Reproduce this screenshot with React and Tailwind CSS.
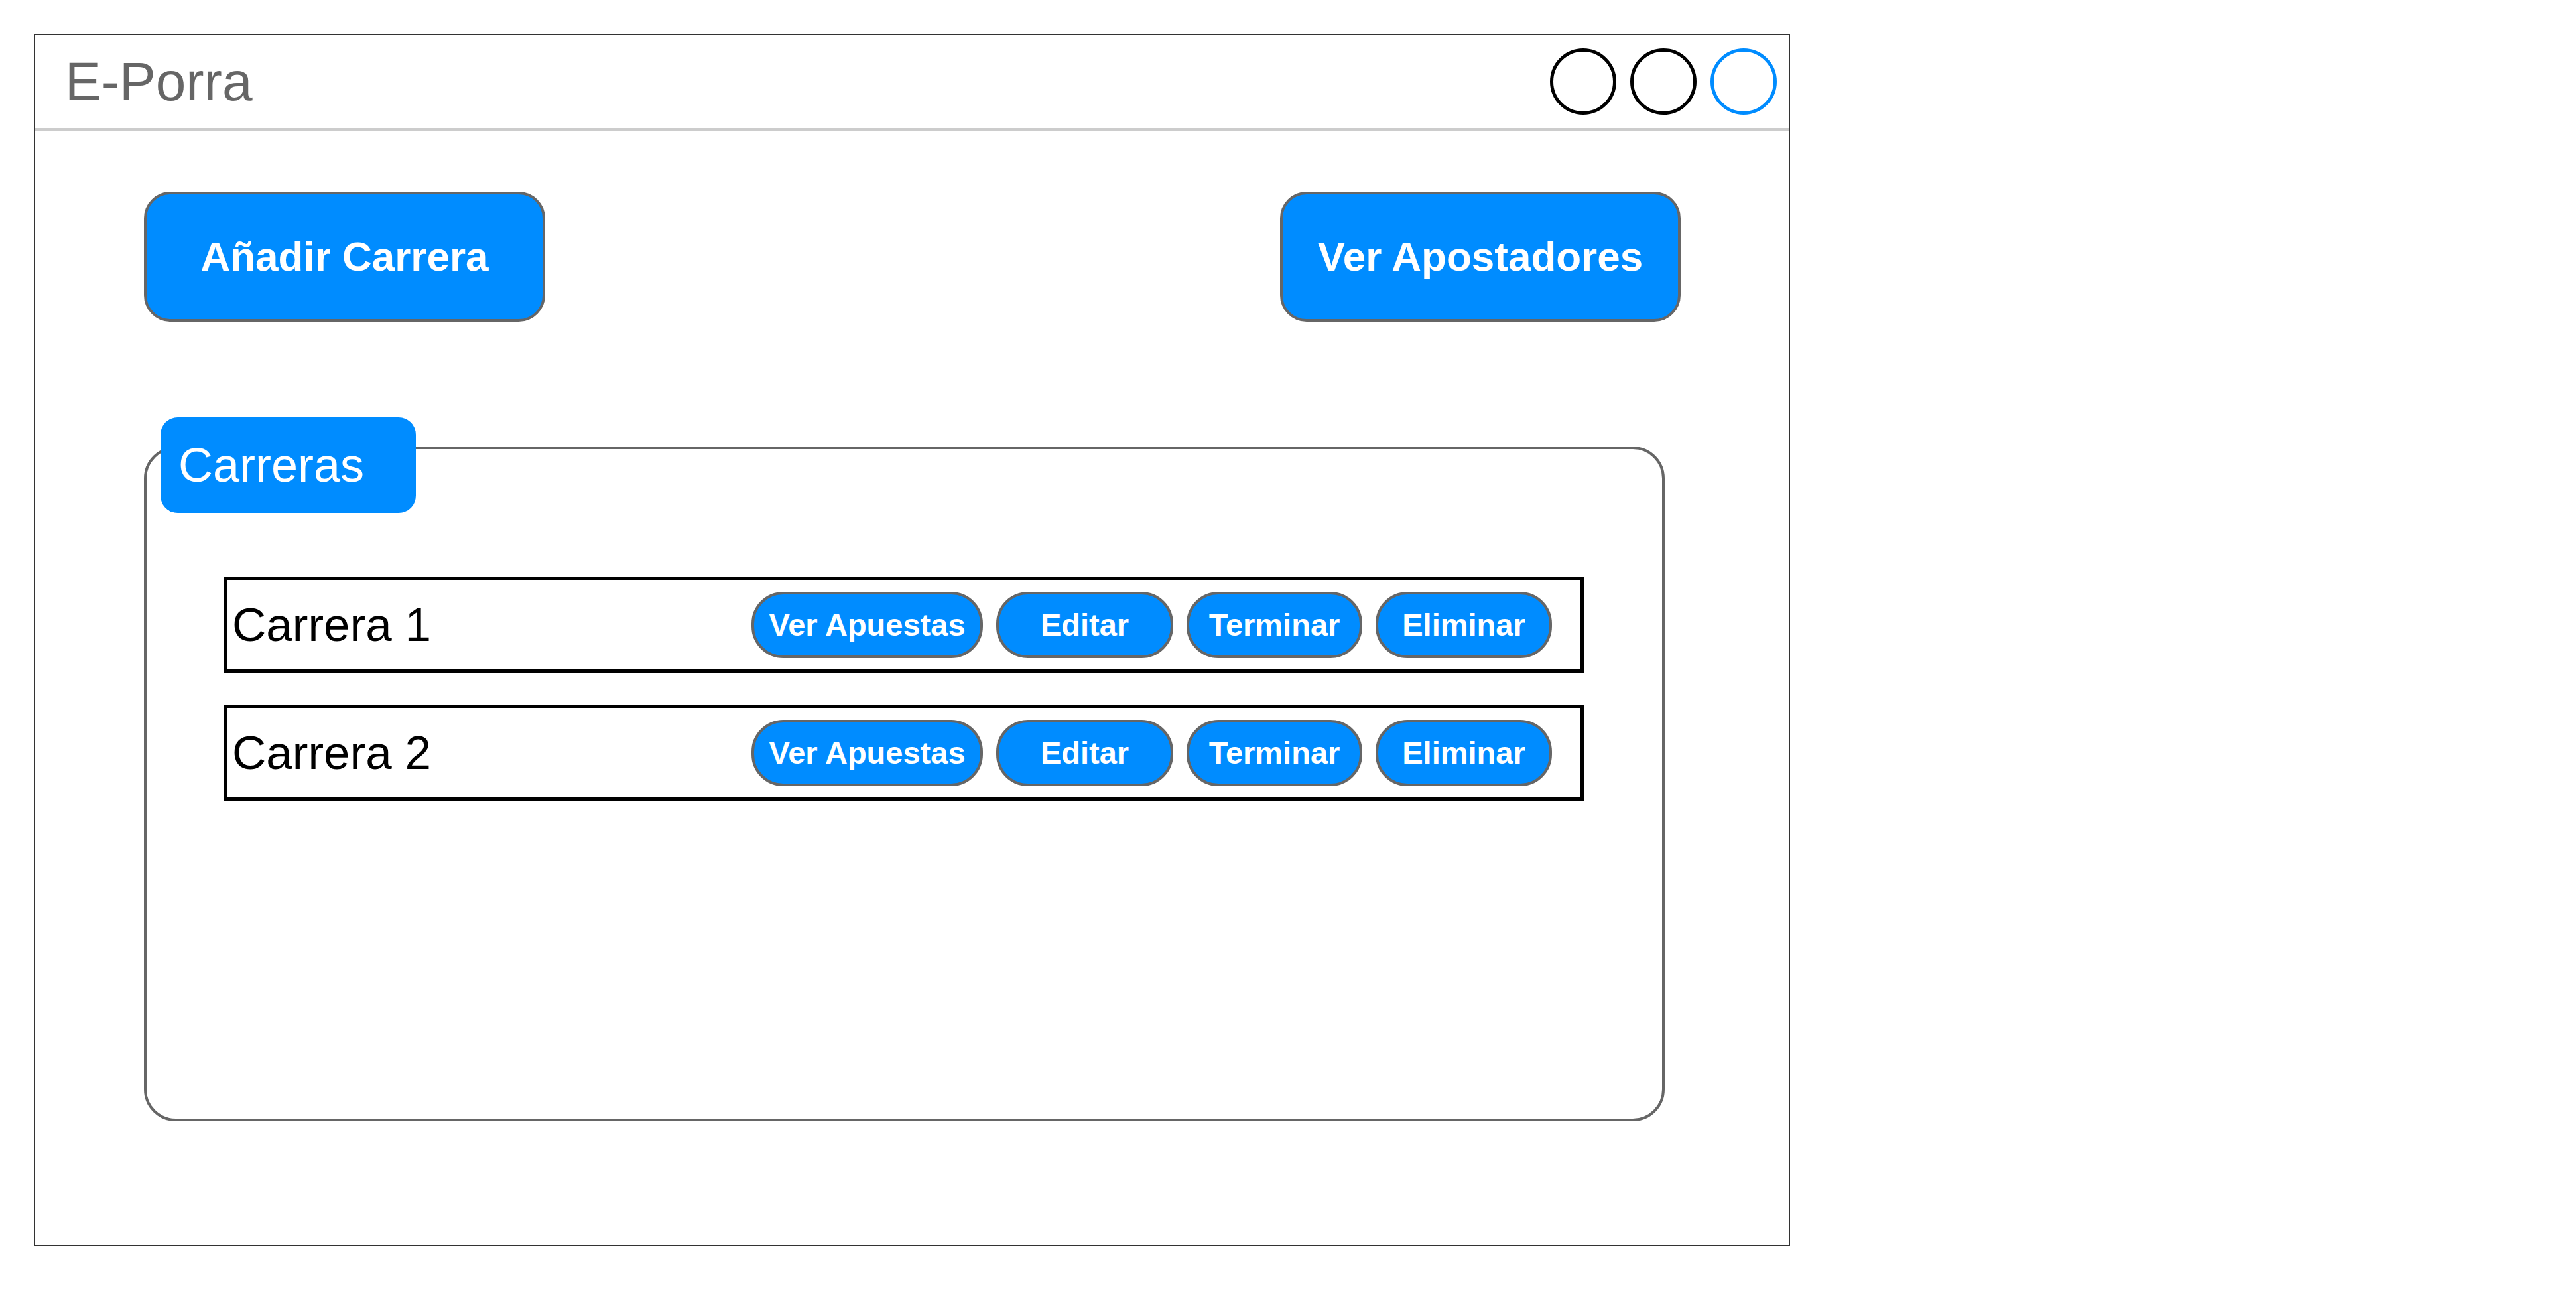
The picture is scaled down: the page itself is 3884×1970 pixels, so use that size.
import React from "react";

const font = { fontFamily: '"Liberation Sans", Arial, sans-serif' };

function SmallButton({ label, w }) {
  return (
    <div
      className={`${w} h-[100px] rounded-[48px] border-4 border-[#666666] bg-[#008cff] flex items-center justify-center text-white font-bold text-[47px] leading-none`}
    >
      {label}
    </div>
  );
}

function Row({ name }) {
  return (
    <div className="h-[145px] border-[5px] border-black flex items-center justify-between pl-[8px] pr-[43px]">
      <span className="text-[71px] leading-none text-black">{name}</span>
      <div className="flex items-center gap-[20px]">
        <SmallButton label="Ver Apuestas" w="w-[349px]" />
        <SmallButton label="Editar" w="w-[267px]" />
        <SmallButton label="Terminar" w="w-[265px]" />
        <SmallButton label="Eliminar" w="w-[266px]" />
      </div>
    </div>
  );
}

export default function App() {
  return (
    <div className="w-[3884px] h-[1970px] bg-white pl-[52px] pt-[52px]" style={font}>
      <div className="w-[2647px] h-[1826px] border border-[#333333] flex flex-col">
        {/* header */}
        <div className="h-[145px] border-b-[5px] border-[#cccccc] flex items-center justify-between pl-[45px] pr-[19px]">
          <span className="text-[82px] leading-none text-[#666666]">E-Porra</span>
          <div className="flex items-center gap-[21px]">
            <div className="w-[100px] h-[100px] rounded-full border-[5px] border-black" />
            <div className="w-[100px] h-[100px] rounded-full border-[5px] border-black" />
            <div className="w-[100px] h-[100px] rounded-full border-[5px] border-[#008cff]" />
          </div>
        </div>

        {/* body */}
        <div className="px-[164px] pt-[91px]">
          <div className="flex justify-between">
            <div className="w-[605px] h-[196px] rounded-[40px] border-4 border-[#666666] bg-[#008cff] flex items-center justify-center text-white font-bold text-[62px] leading-none">
              Añadir Carrera
            </div>
            <div className="w-[604px] h-[196px] rounded-[40px] border-4 border-[#666666] bg-[#008cff] flex items-center justify-center text-white font-bold text-[62px] leading-none">
              Ver Apostadores
            </div>
          </div>

          <div className="relative mt-[144px] pt-[44px] w-[2293px]">
            <div className="absolute left-[25px] top-0 w-[385px] h-[144px] rounded-[26px] bg-[#008cff] flex items-center pl-[27px] text-white text-[72px] leading-none z-10">
              Carreras
            </div>
            <div className="h-[1017px] border-4 border-[#666666] rounded-[48px] pt-[192px] pl-[116px] pr-[118px] flex flex-col gap-[48px]">
              <Row name="Carrera 1" />
              <Row name="Carrera 2" />
            </div>
          </div>
        </div>
      </div>
    </div>
  );
}
